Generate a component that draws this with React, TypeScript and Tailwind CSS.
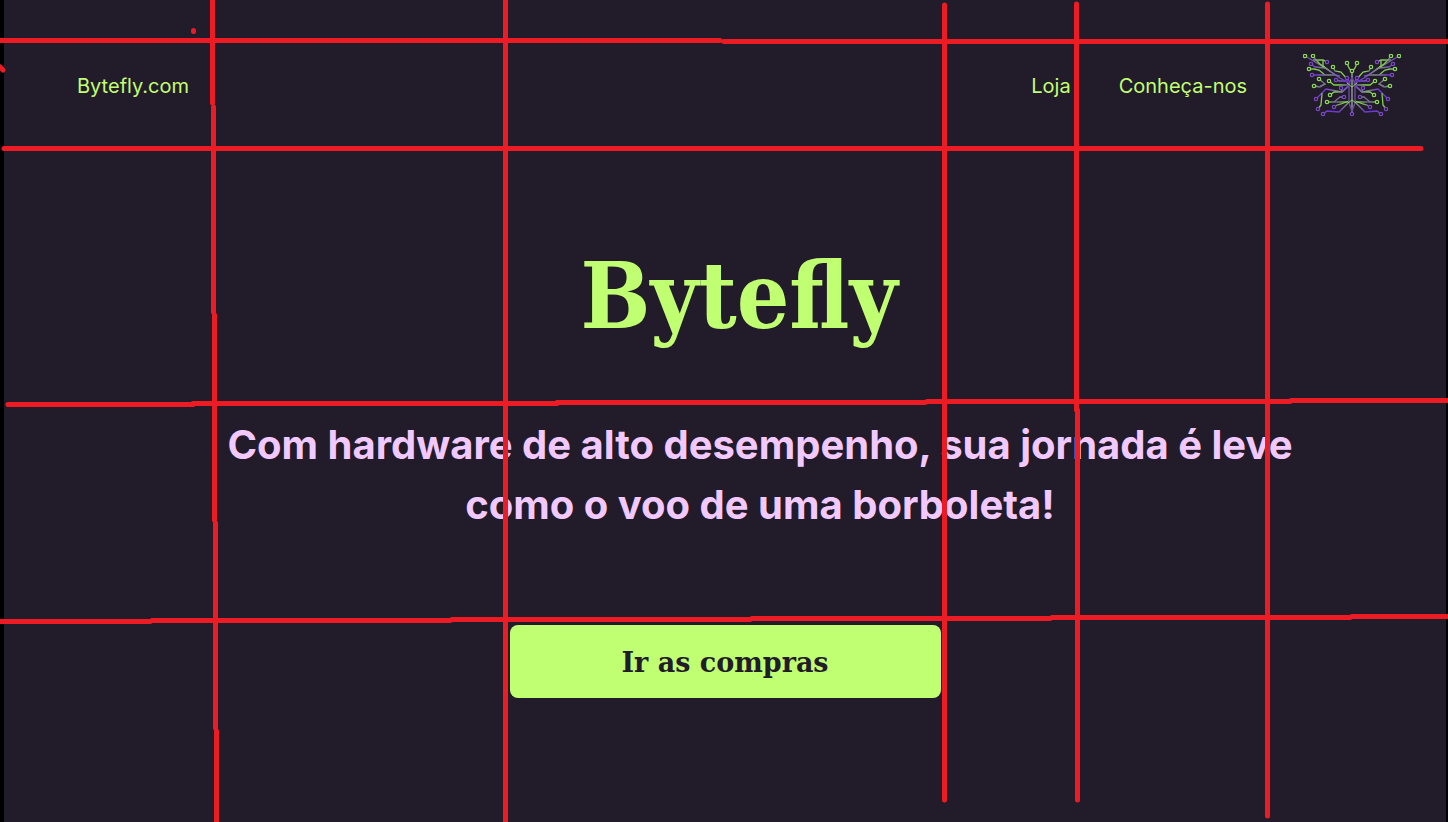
const RED_STROKES: string[] = [
  "M-3 40.500H720",
  "M724 41.500H1451",
  "M4 148.500H1421",
  "M8 404.500H193M193 403.500H557M557 402.500H925M927 401.500H1290M1291 400.500H1451",
  "M-3 621.500H150M152 620.500H450M452 619.500H750M752 618.500H1050M1052 617.500H1350M1352 616.500H1451",
  "M212.500 -3V103M213.500 107V312M214.500 315V520M215.500 523V728M216.500 731V825",
  "M505.500 -3V825",
  "M944.500 5V800",
  "M1076.500 4V410M1077.500 410V800",
  "M1267.500 4V816",
  "M0 67L3 70",
  "M193.500 30.500V31.500",
];

type Branch = { start: string; end: [number, number]; green: boolean };

const BRANCHES: Branch[] = [
  { start: "47,30 37,24 24,15", end: [2, 2], green: false },
  { start: "24,15 17,10 13,6", end: [10, 2], green: true },
  { start: "10,6 20,6", end: [24, 8], green: true },
  { start: "20,6 20,12 24,15", end: [27, 17], green: true },
  { start: "34,22 22,14 12,13", end: [8, 10], green: false },
  { start: "22,21 16,16 11,15", end: [6, 15], green: true },
  { start: "37,22 32,21", end: [9, 21], green: false },
  { start: "45,26 38,18 32,17", end: [30, 13], green: true },
  { start: "45,31 31,31", end: [26, 27], green: true },
  { start: "45,27 37,27", end: [33, 26], green: false },
  { start: "17,32 22,30", end: [16, 25], green: true },
  { start: "22,30 17,33", end: [11, 32], green: true },
  { start: "46,32 39,38 23,35 18,40", end: [13, 45], green: false },
  { start: "19,39 18,51", end: [15, 55], green: true },
  { start: "39,38 31,38", end: [27, 41], green: true },
  { start: "45,32 39,38", end: [38, 34], green: false },
  { start: "45,48 30,48", end: [24, 48], green: true },
  { start: "31,48 37,43", end: [41, 43], green: true },
  { start: "46,47 38,50 34,51", end: [31, 53], green: true },
  { start: "46,48 36,58 24,57", end: [20, 60], green: false },
  { start: "49,18 46,14", end: [44, 9], green: true },
  { start: "47,30 46,27", end: [44, 24], green: false },
];

const GREEN_NODES: [number, number][] = [
  [2, 2], [10, 2], [6, 15], [30, 13], [26, 27], [16, 25], [11, 32], [27, 41], [24, 48], [44, 9],
];

const VIOLET_NODES: [number, number][] = [
  [24, 8], [8, 10], [9, 21], [33, 26], [13, 45], [15, 55], [38, 34], [41, 43], [31, 53], [20, 60], [44, 24],
];

function Wing() {
  return (
    <g>
      {BRANCHES.map(({ start, end, green }) => (
        <polyline
          key={start}
          points={`${start} ${end[0]},${end[1]}`}
          stroke={green ? "url(#circuit)" : "url(#circuit-violet)"}
          strokeWidth="1.300"
        />
      ))}
      {GREEN_NODES.map(([x, y]) => (
        <circle key={`${x}-${y}`} cx={x} cy={y} r="1.700" fill="#221b29" stroke="#8cdc55" strokeWidth="1.200" />
      ))}
      {VIOLET_NODES.map(([x, y]) => (
        <circle key={`${x}-${y}`} cx={x} cy={y} r="1.700" fill="#221b29" stroke="#7a48c8" strokeWidth="1.200" />
      ))}
    </g>
  );
}

function Butterfly() {
  return (
    <svg viewBox="0 0 98 64" className="h-16 w-[98px]" fill="none" aria-hidden="true">
      <defs>
        <linearGradient id="circuit" gradientUnits="userSpaceOnUse" x1="0" y1="0" x2="9" y2="6" spreadMethod="reflect">
          <stop offset="0.400" stopColor="#83cf52" />
          <stop offset="1" stopColor="#75649a" />
        </linearGradient>
        <linearGradient id="circuit-violet" gradientUnits="userSpaceOnUse" x1="0" y1="8" x2="13" y2="0" spreadMethod="reflect">
          <stop offset="0.300" stopColor="#7038d8" />
          <stop offset="1" stopColor="#7d8f80" />
        </linearGradient>
      </defs>
      <Wing />
      <g transform="matrix(-1 0 0 1 98 0)">
        <Wing />
      </g>
      <path d="M49 18V59" stroke="#7d8585" strokeWidth="1.800" />
      <path d="M46 29V49L49 57L52 49V29L49 24Z" stroke="#6b4b9c" strokeWidth="1.400" />
      <path d="M44 29L49 33L54 29M45 49L49 46L53 49" stroke="#83cf52" />
      <circle cx="49" cy="17" r="1.700" fill="#221b29" stroke="#8cdc55" strokeWidth="1.200" />
      <circle cx="49" cy="60" r="1.700" fill="#221b29" stroke="#7a48c8" strokeWidth="1.200" />
    </svg>
  );
}

function GuideLines() {
  return (
    <svg
      className="pointer-events-none absolute inset-0 h-full w-full"
      viewBox="0 0 1448 822"
      preserveAspectRatio="none"
      fill="none"
      stroke="#ed1c24"
      strokeWidth="5"
      strokeLinecap="round"
      aria-hidden="true"
    >
      {RED_STROKES.map((d) => (
        <path key={d} d={d} />
      ))}
    </svg>
  );
}

export default function App() {
  return (
    <div className="relative overflow-hidden font-['Inter',sans-serif]">
      <div className="min-h-screen border-r-2 border-l-4 border-black bg-[#221b29]">
        <header className="flex h-[172px] items-center justify-between pr-[45px] pl-[73px] text-xl text-[#c1ff72]">
          <a href="#inicio">Bytefly.com</a>
          <nav className="flex items-center">
            <a href="#loja">Loja</a>
            <a href="#conheca" className="ml-12">Conheça-nos</a>
            <a href="#inicio" aria-label="Bytefly" className="ml-14">
              <Butterfly />
            </a>
          </nav>
        </header>
        <main className="flex flex-col items-center pt-[59px] text-center">
          <h1 className="ml-7 font-['DejaVu_Serif_Condensed','DejaVu_Serif',serif] text-[92px] leading-[130px] font-bold text-[#c1ff72]">
            Bytefly
          </h1>
          <p className="mt-[54px] ml-[70px] max-w-[1120px] text-[40px] leading-[60px] font-bold text-[#f1c9ff]">
            Com hardware de alto desempenho, sua jornada é leve como o voo de uma borboleta!
          </p>
          <button
            type="button"
            className="mt-[90px] h-[73px] w-[431px] rounded-lg bg-[#c1ff72] pt-1 font-['DejaVu_Serif',serif] text-[27px] font-bold text-[#221b29]"
          >
            Ir as compras
          </button>
        </main>
      </div>
      <GuideLines />
    </div>
  );
}
